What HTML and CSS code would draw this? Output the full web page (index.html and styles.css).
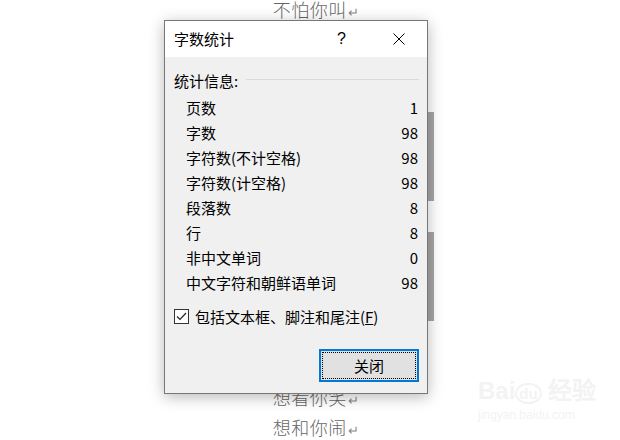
FILE: index.html
```html
<!DOCTYPE html>
<html lang="zh-CN">
<head>
<meta charset="utf-8">
<title>字数统计</title>
<link rel="stylesheet" href="styles.css">
</head>
<body>
<div class="page">
  <div class="doc">
    <p class="line">不怕你叫<span class="ret">↵</span></p>
    <div class="hidden-lines"></div>
    <p class="line">想看你笑<span class="ret">↵</span></p>
    <p class="line">想和你闹<span class="ret">↵</span></p>
  </div>
  <div class="sel sel-a"></div>
  <div class="sel sel-b"></div>
  <div class="watermark">
    <div class="wm-logo">Bai<span class="wm-du">du</span> 经验</div>
    <div class="wm-url">jingyan.baidu.com</div>
  </div>

  <div class="dialog" role="dialog">
    <div class="titlebar">
      <span class="title">字数统计</span>
      <span class="tbtn help">?</span>
      <span class="tbtn close">
        <svg width="12" height="12" viewBox="0 0 12 12"><path d="M0.5 0.5 L11.5 11.5 M11.5 0.5 L0.5 11.5" stroke="#000" stroke-width="1" fill="none"/></svg>
      </span>
    </div>
    <div class="body">
      <div class="group-head">
        <span>统计信息:</span>
        <span class="rule"></span>
      </div>
      <div class="stats">
        <div class="row"><span>页数</span><span>1</span></div>
        <div class="row"><span>字数</span><span>98</span></div>
        <div class="row"><span>字符数(不计空格)</span><span>98</span></div>
        <div class="row"><span>字符数(计空格)</span><span>98</span></div>
        <div class="row"><span>段落数</span><span>8</span></div>
        <div class="row"><span>行</span><span>8</span></div>
        <div class="row"><span>非中文单词</span><span>0</span></div>
        <div class="row"><span>中文字符和朝鲜语单词</span><span>98</span></div>
      </div>
      <label class="check">
        <span class="box">
          <svg width="13" height="13" viewBox="0 0 13 13"><path d="M2 6.5 L5 9.5 L11 3" stroke="#222" stroke-width="1.2" fill="none"/></svg>
        </span>
        <span>包括文本框、脚注和尾注(<u>F</u>)</span>
      </label>
      <div class="actions">
        <button class="btn"><span class="focus">关闭</span></button>
      </div>
    </div>
  </div>
</div>
</body>
</html>
```

FILE: styles.css
```css
* { box-sizing: border-box; }
html, body { margin: 0; padding: 0; background: #fff; }
.page {
  position: relative;
  width: 620px;
  height: 440px;
  overflow: hidden;
  background: #fff;
  font-family: "Noto Sans CJK SC", "Noto Sans", sans-serif;
}
.doc {
  display: flex;
  flex-direction: column;
  align-items: center;
  gap: 10px;
  padding-top: 1px;
  padding-left: 12px;
}
.line {
  margin: 0;
  height: 20px;
  line-height: 20px;
  font-family: "Liberation Serif", "Noto Sans CJK SC", serif;
  font-size: 18px;
  font-weight: 300;
  color: #666;
  letter-spacing: 0.5px;
}
.ret { font-size: 13px; color: #8a8a8a; margin-left: 1px; }
.hidden-lines { height: 348px; }
.sel {
  position: absolute;
  left: 426px;
  width: 8px;
  background: #a6a6a6;
}
.sel-a { top: 112px; height: 89px; }
.sel-b { top: 232px; height: 89px; }
.watermark {
  position: absolute;
  left: 478px;
  top: 378px;
  color: #f3f3f3;
  font-family: "Liberation Sans", sans-serif;
}
.wm-logo { font-size: 24px; font-weight: bold; line-height: 26px; }
.wm-du { font-size: 15px; border: 2px solid #f3f3f3; border-radius: 50%; padding: 0 2px; }
.wm-url { font-size: 12px; line-height: 16px; }

.dialog {
  position: absolute;
  left: 164px;
  top: 20px;
  width: 264px;
  height: 374px;
  border: 1px solid #777;
  background: #f0f0f0;
  box-shadow: 0 3px 14px rgba(0, 0, 0, 0.28);
  display: flex;
  flex-direction: column;
  color: #000;
  font-size: 15px;
}
.titlebar {
  height: 36px;
  background: #fff;
  display: flex;
  align-items: center;
  padding-left: 9px;
  flex: none;
}
.title { flex: 1; line-height: 36px; }
.tbtn {
  width: 57px;
  height: 36px;
  display: flex;
  align-items: center;
  justify-content: center;
}
.help { font-size: 16px; font-family: "Liberation Sans", sans-serif; }
.body {
  flex: 1;
  display: flex;
  flex-direction: column;
  padding: 12px 8px 11px 9px;
}
.group-head {
  display: flex;
  align-items: center;
  height: 22px;
  gap: 8px;
}
.rule {
  flex: 1;
  height: 1px;
  background: #dadada;
  margin-top: -2px;
}
.stats {
  margin-top: 5px;
  padding-left: 12px;
  padding-right: 1px;
}
.row {
  display: flex;
  justify-content: space-between;
  height: 25px;
  line-height: 24px;
}
.check {
  display: flex;
  align-items: center;
  gap: 6px;
  height: 20px;
  margin-top: 10px;
}
.box {
  width: 15px;
  height: 15px;
  border: 1px solid #333;
  background: #fff;
  display: flex;
  align-items: center;
  justify-content: center;
}
.actions {
  margin-top: auto;
  display: flex;
  justify-content: flex-end;
}
.btn {
  width: 100px;
  height: 33px;
  border: 2px solid #0078d7;
  background: #e1e1e1;
  padding: 1px;
  font-family: inherit;
  font-size: 15px;
  color: #000;
  display: flex;
}
.focus {
  flex: 1;
  border: 1px dotted #000;
  display: flex;
  align-items: center;
  justify-content: center;
}
```
